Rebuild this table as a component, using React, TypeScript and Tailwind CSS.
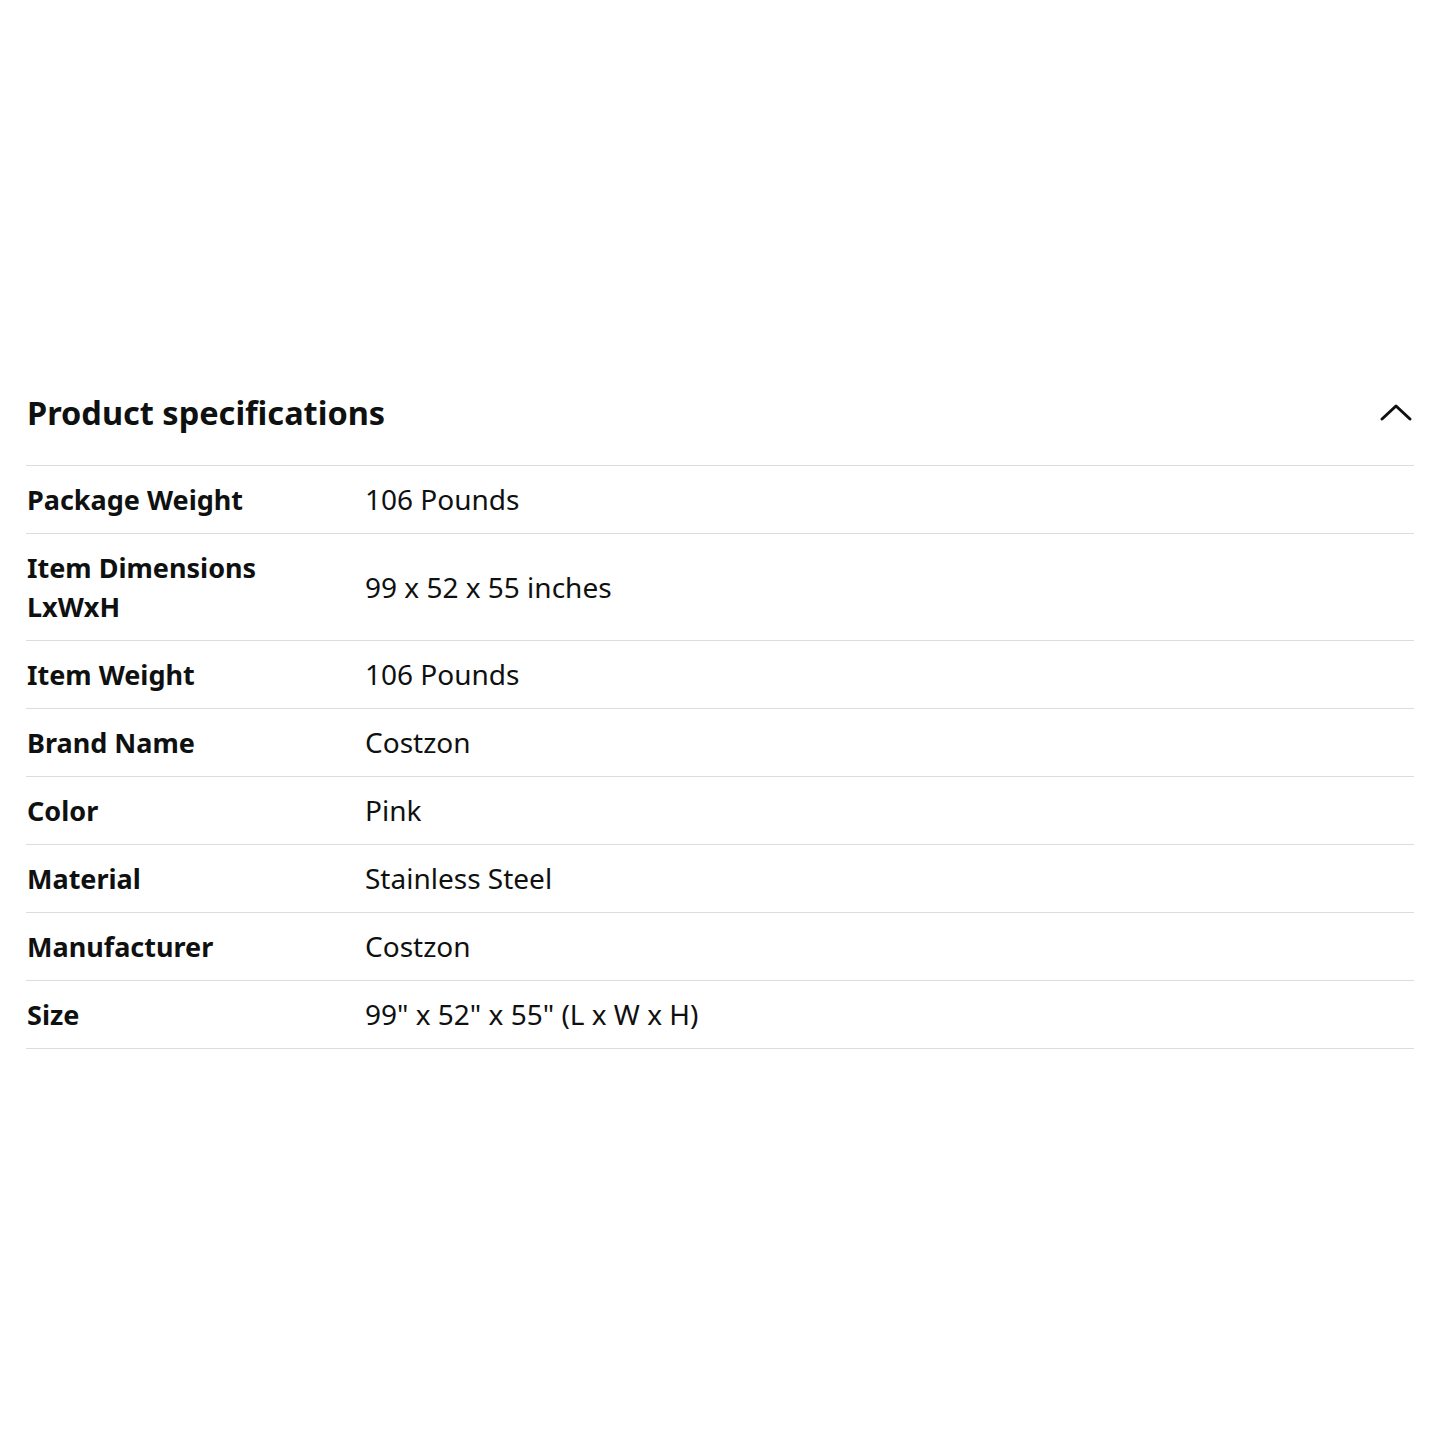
import React from "react";

const rows: { label: string; value: string }[] = [
  { label: "Package Weight", value: "106 Pounds" },
  { label: "Item Dimensions LxWxH", value: "99 x 52 x 55 inches" },
  { label: "Item Weight", value: "106 Pounds" },
  { label: "Brand Name", value: "Costzon" },
  { label: "Color", value: "Pink" },
  { label: "Material", value: "Stainless Steel" },
  { label: "Manufacturer", value: "Costzon" },
  { label: "Size", value: '99" x 52" x 55" (L x W x H)' },
];

export default function App() {
  return (
    <div
      className="w-[1440px] h-[1440px] bg-white text-[#0f1111]"
      style={{ fontFamily: '"Noto Sans", sans-serif' }}
    >
      <div className="pt-[390px] px-[26px]">
        <div className="flex items-center justify-between h-[46px] mb-[29px]">
          <h2 className="text-[32.5px] font-bold leading-[46px] pl-[1px]">Product specifications</h2>
          <svg width="34" height="22" viewBox="0 0 34 22" className="mr-[1px]">
            <path d="M3 17 L17 4 L31 17" fill="none" stroke="#0f1111" strokeWidth="3" strokeLinecap="round" strokeLinejoin="round" />
          </svg>
        </div>
        <div className="border-t border-[#dddddd]">
          {rows.map((r) => (
            <div key={r.label} className="flex items-center border-b border-[#dddddd] py-[14px]">
              <div className="w-[339px] shrink-0 pr-[30px] pl-[1px] text-[27px] font-bold leading-[39px]">{r.label}</div>
              <div className="text-[28px] leading-[39px]">{r.value}</div>
            </div>
          ))}
        </div>
      </div>
    </div>
  );
}
